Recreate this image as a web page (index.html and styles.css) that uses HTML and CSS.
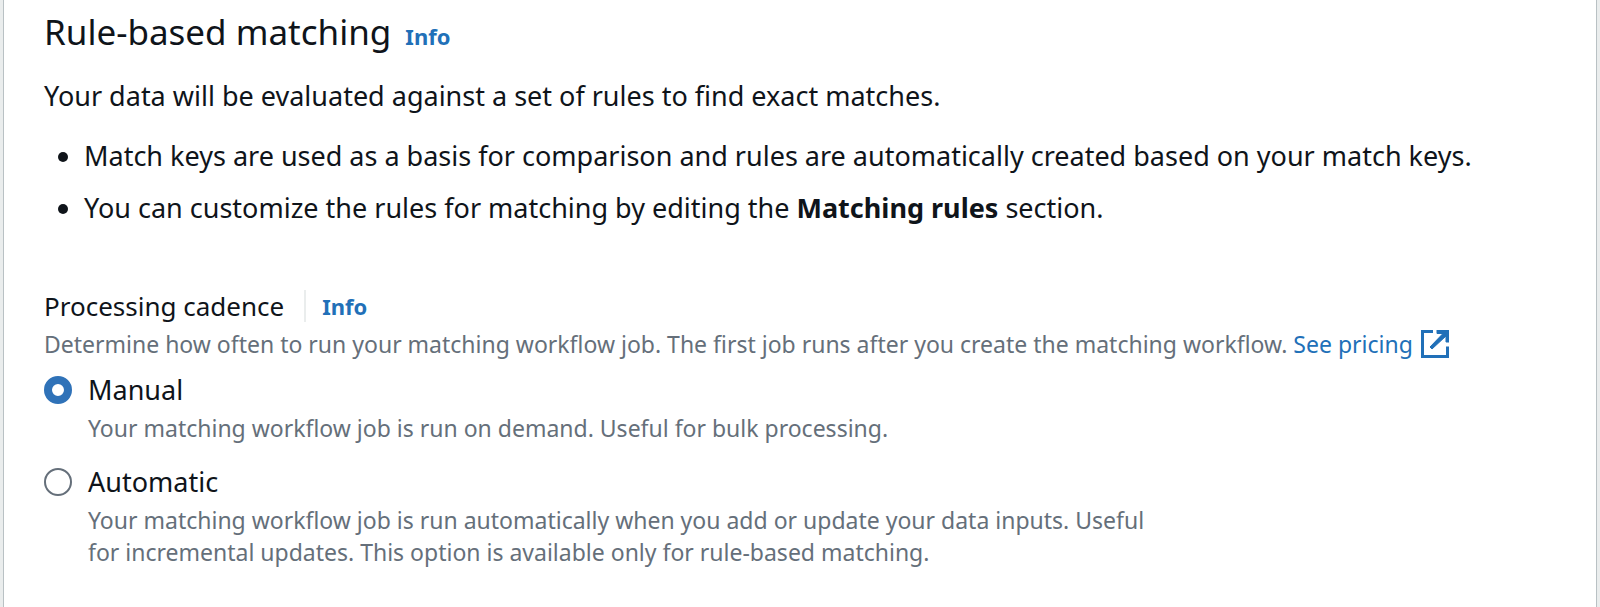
FILE: index.html
```html
<!DOCTYPE html>
<html lang="en">
<head>
  <meta charset="UTF-8" />
  <meta name="viewport" content="width=device-width,initial-scale=1.0"/>
  <title>Rule-based matching</title>
  <link rel="stylesheet" href="styles.css">
</head>
<body>
  <main class="panel">
    <header class="panel-header">
      <h1>Rule-based matching</h1>
      <a class="info" href="#matching-info">Info</a>
    </header>
    <p class="intro">Your data will be evaluated against a set of rules to find exact matches.</p>
    <ul class="notes">
      <li>Match keys are used as a basis for comparison and rules are automatically created based on your match keys.</li>
      <li>You can customize the rules for matching by editing the <strong>Matching rules</strong> section.</li>
    </ul>

    <form class="cadence">
      <div class="cadence-header">
        <h2 id="cadenceLabel">Processing cadence</h2>
        <a class="info" href="#cadence-info">Info</a>
      </div>
      <p class="hint">
        Determine how often to run your matching workflow job. The first job runs after you create the matching workflow.
        <a class="external" href="#pricing">See pricing
          <svg class="icon" viewBox="0 0 28 28" aria-hidden="true">
            <path class="frame" d="M12 1.500H1.500v25h25V16.500"/>
            <path class="arrow" d="M16 0h12v12h-3V6L11 19l-2-2L22 3.500h-6z"/>
          </svg></a>
      </p>
      <div class="options" role="radiogroup" aria-labelledby="cadenceLabel">
        <div class="option">
          <input type="radio" name="cadence" id="manual" aria-describedby="manualHint" checked>
          <div class="option-text">
            <label for="manual">Manual</label>
            <p class="hint" id="manualHint">Your matching workflow job is run on demand. Useful for bulk processing.</p>
          </div>
        </div>
        <div class="option">
          <input type="radio" name="cadence" id="automatic" aria-describedby="automaticHint">
          <div class="option-text">
            <label for="automatic">Automatic</label>
            <p class="hint" id="automaticHint">Your matching workflow job is run automatically when you add or update your data inputs. Useful for incremental updates. This option is available only for rule-based matching.</p>
          </div>
        </div>
      </div>
    </form>
  </main>
</body>
</html>
```
FILE: styles.css
```css
* {
  box-sizing: border-box;
}
body {
  margin: 0;
  background: #eaeded;
  font-family: "Noto Sans", "Open Sans", sans-serif;
  font-size: 27px;
  line-height: 40px;
  color: #0f141a;
}
.panel {
  min-height: 100vh;
  margin: 0 3px;
  padding: 8px 40px;
  background: #fff;
  border: solid #b9c1c4;
  border-width: 0 1px;
}
h1, h2, p, ul {
  margin: 0;
  font-weight: 400;
}
h1 {
  font-size: 35px;
  line-height: 48px;
}
h2 {
  font-size: 26px;
  line-height: 32px;
}
a {
  color: #2170b8;
  text-decoration: none;
}
.panel-header {
  display: flex;
  align-items: baseline;
  gap: 14px;
}
.info {
  font-size: 22px;
  line-height: 32px;
  font-weight: 700;
}
.intro {
  margin-top: 20px;
}
.notes {
  margin-top: 20px;
  padding-left: 40px;
}
.notes li + li {
  margin-top: 12px;
}
.cadence {
  margin-top: 62px;
}
.cadence-header {
  display: flex;
  align-items: center;
}
.cadence-header .info {
  margin-left: 20px;
  padding-left: 16px;
  border-left: 2px solid #eaeded;
}
.hint {
  font-size: 23px;
  line-height: 32px;
  color: #656f7a;
}
.cadence-header + .hint {
  margin-top: 6px;
}
.external {
  white-space: nowrap;
}
.icon {
  width: 28px;
  height: 28px;
  margin-left: 2px;
  vertical-align: -5px;
}
.icon .frame {
  fill: none;
  stroke: currentColor;
  stroke-width: 3;
}
.icon .arrow {
  fill: currentColor;
  stroke: currentColor;
  stroke-width: 1;
}
.options {
  display: grid;
  gap: 18px;
  margin-top: 10px;
}
.option {
  display: flex;
  gap: 16px;
}
.option-text {
  max-width: 1080px;
}
.option label {
  display: block;
}
.option .hint {
  margin-top: 2px;
}
input[type="radio"] {
  appearance: none;
  flex: none;
  width: 28px;
  height: 28px;
  margin: 6px 0;
  border: 2px solid #656f7a;
  border-radius: 50%;
  background: #fff;
}
input[type="radio"]:checked {
  border: 8px solid #2f72b8;
}
```
